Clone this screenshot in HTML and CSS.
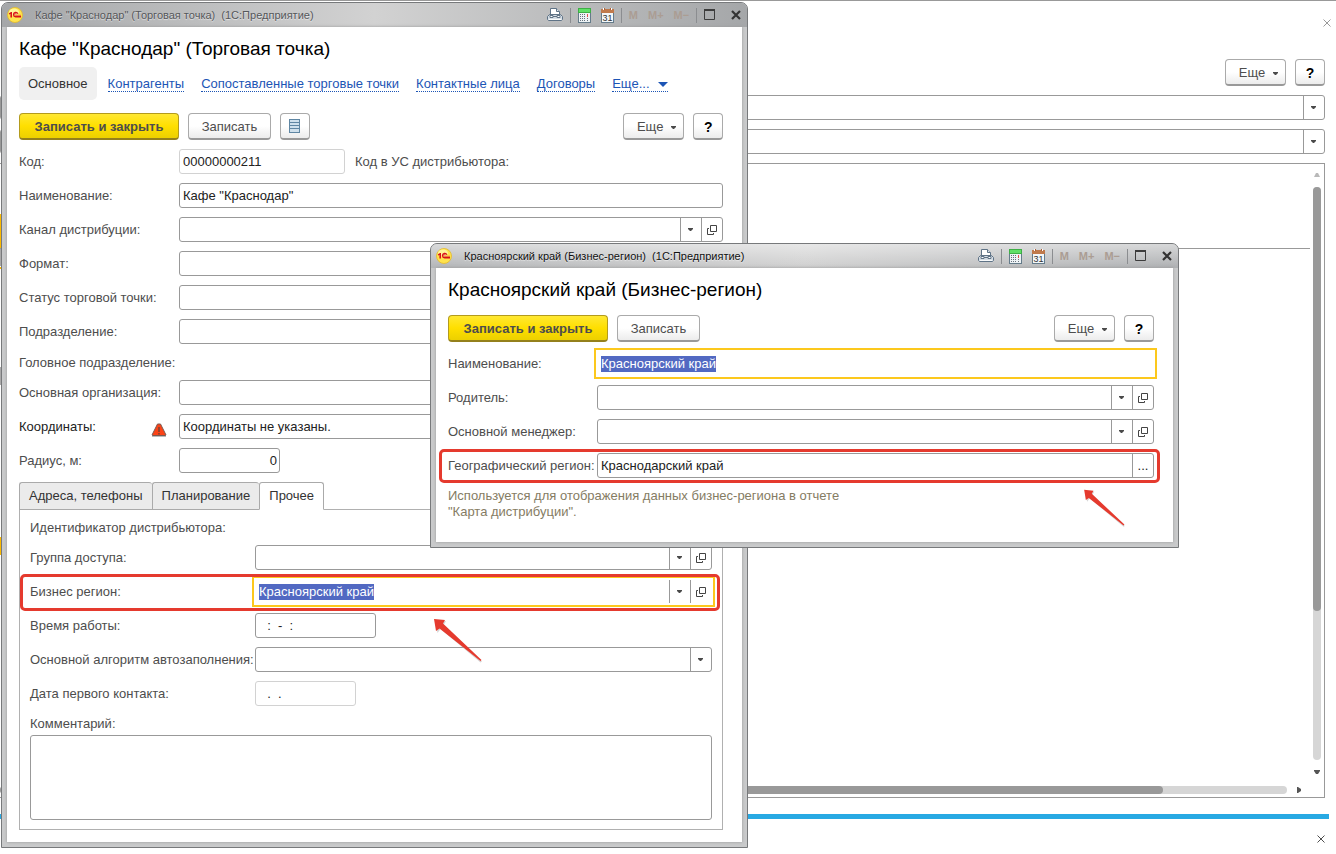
FILE: index.html
```
<!DOCTYPE html>
<html lang="ru">
<head>
    <meta charset="UTF-8">
    <meta name="viewport" content="width=device-width, initial-scale=1.0">
    <title>1С:Предприятие</title>
    <link rel="stylesheet" href="styles.css">
</head>
<body>

    <!-- Shared icons -->
    <svg class="sprite" aria-hidden="true">
        <symbol id="logo" viewBox="0 0 16 16">
            <circle cx="8" cy="8" r="7.5" fill="#ffe34d" stroke="#e3b92a" stroke-width="0.8"/>
            <ellipse cx="7" cy="5" rx="5" ry="3.5" fill="#fff59a"/>
            <path d="M2 6.3 L4 5 H5 V10.5 H3.4 V7 L2 7.6 Z" fill="#d8121b"/>
            <path d="M10.8 6.8 A2.2 2.2 0 1 0 8.6 9.8 H14" fill="none" stroke="#d8121b" stroke-width="1.4"/>
            <path d="M9.6 7.3 A0.9 0.9 0 1 0 8.8 8.3 H14" fill="none" stroke="#d8121b" stroke-width="0.6"/>
        </symbol>
        <symbol id="printer" viewBox="0 0 16 16">
            <path d="M3.5 8.5 V1.5 H9.5 L12.5 4.5 V8.5 Z" fill="#fff" stroke="#5f7386"/>
            <path d="M9.5 1.5 V4.5 H12.5" fill="#dde5ec" stroke="#5f7386"/>
            <path d="M2.5 7.5 H13.5 L15.5 9.5 V12.5 L14.5 13.5 H1.5 L0.5 12.5 V9.5 Z" fill="#d5dde4" stroke="#5f7386"/>
            <path d="M3 8.5 H6 V10.5 H3 Z M10 8.5 H13 V10.5 H10 Z M6 9.5 H10" fill="#fff" stroke="#5f7386"/>
            <path d="M2 12.5 H14" stroke="#f8fafb"/>
        </symbol>
        <symbol id="calc" viewBox="0 0 13 15">
            <rect x="0.5" y="0.5" width="12" height="14" fill="#eef3f5" stroke="#647b8a"/>
            <rect x="0" y="0" width="13" height="5" fill="#3faf46"/>
            <rect x="1" y="1" width="11" height="3" fill="#5fe066"/>
            <path d="M2 6.5 H8 M2 8.5 H8 M2 10.5 H8 M2 12.5 H8" stroke="#68717c" stroke-dasharray="1 1"/>
            <path d="M9.5 6 V9" stroke="#e4504a"/>
            <path d="M9.5 10 V13" stroke="#68717c" stroke-dasharray="1 1"/>
        </symbol>
        <symbol id="calendar" viewBox="0 0 13 15">
            <rect x="0.5" y="2.5" width="12" height="12" fill="#f3f8fa" stroke="#647b8a"/>
            <rect x="0" y="1" width="13" height="4" fill="#c07a4c"/>
            <path d="M2.5 0 V2 M10.5 0 V2" stroke="#fff"/>
            <path d="M3.5 0 V2 M9.5 0 V2" stroke="#a8623a"/>
            <text x="6.5" y="12.5" text-anchor="middle" class="calendar-day">31</text>
        </symbol>
        <symbol id="maximize" viewBox="0 0 12 12">
            <path d="M0.5 1 V10.5 H10.5 V1" fill="none" stroke="#3c3c3c"/>
            <path d="M0 1 H11" stroke="#3c3c3c" stroke-width="2"/>
        </symbol>
        <symbol id="close" viewBox="0 0 10 10">
            <path d="M1 1 L9 9 M9 1 L1 9" stroke="#333" stroke-width="2.2"/>
        </symbol>
        <symbol id="cross" viewBox="0 0 8 8">
            <path d="M0.5 0.5 L7.5 7.5 M7.5 0.5 L0.5 7.5" stroke="currentColor"/>
        </symbol>
        <symbol id="down" viewBox="0 0 5 3">
            <path d="M0 0 H5 V1 L3 3 H2 L0 1 Z" fill="#4a4a4a"/>
        </symbol>
        <symbol id="open" viewBox="0 0 10 10">
            <path d="M3.5 0.5 H9.5 V6.5 H3.5 Z M2 3.5 H0.5 V9.5 H6.5 V8" fill="none" stroke="#444"/>
        </symbol>
        <symbol id="arrow" viewBox="0 0 50 46">
            <path d="M2 3 L13 3 L10.5 7.5 L49 43.5 L47.5 44.5 L7.5 11 L4.5 15 Z" fill="#bbb" opacity="0.6"/>
            <path d="M1 1 L12 2 L10 5.5 L48.5 42 L47.5 43 L6.5 10.5 L3 13 Z" fill="#e53a2e"/>
        </symbol>
    </svg>

    <!-- Main window, partly covered -->
    <main class="desktop">
        <div class="desktop-top">
            <button class="plain pale" aria-label="Закрыть"><svg width="8" height="8"><use href="#cross"/></svg></button>
        </div>
        <div class="desktop-form">
            <div class="toolbar">
                <button class="btn more">Еще <svg width="5" height="3"><use href="#down"/></svg></button>
                <button class="btn help">?</button>
            </div>
            <select class="select" aria-label="Отбор 1"></select>
            <select class="select" aria-label="Отбор 2"></select>
            <div class="list">
                <div class="list-body">
                    <div class="list-header"></div>
                    <div class="scroll-y">
                        <svg width="6" height="4"><path d="M0 4 L2 0 H4 L6 4 Z" fill="#b9b9b9"/></svg>
                        <div class="track"><div class="thumb"></div></div>
                        <svg width="6" height="4"><path d="M0 0 H6 V1 L4 4 H2 L0 1 Z" fill="#555"/></svg>
                    </div>
                </div>
                <div class="scroll-x">
                    <div class="track"><div class="thumb"></div></div>
                    <svg width="4" height="6"><path d="M0 0 H1 L4 2 V4 L1 6 H0 Z" fill="#555"/></svg>
                </div>
            </div>
        </div>
        <div class="messages">
            <button class="plain" aria-label="Закрыть сообщения"><svg width="8" height="8"><use href="#cross"/></svg></button>
        </div>
    </main>

    <!-- Outlet window -->
    <section class="window window-outlet">
        <header class="titlebar">
            <svg class="logo" width="16" height="16"><use href="#logo"/></svg>
            <span class="caption">Кафе "Краснодар" (Торговая точка)&nbsp; (1С:Предприятие)</span>
            <div class="tools">
                <button class="plain" aria-label="Печать"><svg width="16" height="16"><use href="#printer"/></svg></button>
                <i class="sep"></i>
                <button class="plain" aria-label="Калькулятор"><svg width="13" height="15"><use href="#calc"/></svg></button>
                <button class="plain" aria-label="Календарь"><svg width="13" height="15"><use href="#calendar"/></svg></button>
                <i class="sep"></i>
                <button class="plain memory">M</button>
                <button class="plain memory">M+</button>
                <button class="plain memory">M−</button>
                <i class="sep"></i>
                <button class="plain" aria-label="Развернуть"><svg width="12" height="12"><use href="#maximize"/></svg></button>
                <button class="plain close" aria-label="Закрыть"><svg width="10" height="10"><use href="#close"/></svg></button>
            </div>
        </header>
        <div class="content">
            <h1>Кафе "Краснодар" (Торговая точка)</h1>
            <nav class="nav">
                <span class="current">Основное</span>
                <a href="#">Контрагенты</a>
                <a href="#">Сопоставленные торговые точки</a>
                <a href="#">Контактные лица</a>
                <a href="#">Договоры</a>
                <a href="#">Еще... <svg width="10" height="5"><path d="M0 0 H10 L5 5 Z" fill="#1c55b5"/></svg></a>
            </nav>
            <div class="toolbar">
                <button class="btn primary">Записать и закрыть</button>
                <button class="btn save">Записать</button>
                <button class="btn icon" aria-label="Список">
                    <svg width="12" height="14">
                        <rect x="0.5" y="0.5" width="10" height="13" fill="#cfe0ec" stroke="#5f86a3"/>
                        <path d="M1 3.5 H10 M1 6.5 H10 M1 9.5 H10" stroke="#5f86a3"/>
                    </svg>
                </button>
                <span class="spacer"></span>
                <button class="btn more">Еще <svg width="5" height="3"><use href="#down"/></svg></button>
                <button class="btn help">?</button>
            </div>

            <div class="form">
                <div class="row">
                    <label for="code">Код:</label>
                    <div class="field readonly code"><input id="code" value="00000000211" readonly></div>
                    <span class="after">Код в УС дистрибьютора:</span>
                </div>
                <div class="row">
                    <label for="name">Наименование:</label>
                    <div class="field"><input id="name" value='Кафе "Краснодар"'></div>
                </div>
                <div class="row">
                    <label for="channel">Канал дистрибуции:</label>
                    <div class="field">
                        <input id="channel">
                        <button aria-label="Выбрать"><svg width="5" height="3"><use href="#down"/></svg></button>
                        <button aria-label="Открыть"><svg width="10" height="10"><use href="#open"/></svg></button>
                    </div>
                </div>
                <div class="row">
                    <label for="format">Формат:</label>
                    <div class="field"><input id="format"></div>
                </div>
                <div class="row">
                    <label for="state">Статус торговой точки:</label>
                    <div class="field"><input id="state"></div>
                </div>
                <div class="row">
                    <label for="unit">Подразделение:</label>
                    <div class="field"><input id="unit"></div>
                </div>
                <div class="row text">Головное подразделение:</div>
                <div class="row">
                    <label for="org">Основная организация:</label>
                    <div class="field"><input id="org"></div>
                </div>
                <div class="row">
                    <label for="coords" class="dark">Координаты:
                        <svg class="warning" width="16" height="14">
                            <path d="M1 13 H15" stroke="#bbb" stroke-width="2"/>
                            <path d="M6.5 1 H9.5 L15 12 L14 12.5 H2 L1 12 Z" fill="#fb4316" stroke="#7a5a52"/>
                            <path d="M8 4 V9 M8 10 V11.5" stroke="#6d4338" stroke-width="1.4"/>
                        </svg>
                    </label>
                    <div class="field"><input id="coords" value="Координаты не указаны."></div>
                </div>
                <div class="row">
                    <label for="radius">Радиус, м:</label>
                    <div class="field radius"><input id="radius" value="0"></div>
                </div>
            </div>

            <div class="tabs">
                <button>Адреса, телефоны</button>
                <button>Планирование</button>
                <button class="active">Прочее</button>
            </div>
            <div class="form panel">
                <div class="row text">Идентификатор дистрибьютора:</div>
                <div class="row">
                    <label for="access">Группа доступа:</label>
                    <div class="field">
                        <input id="access">
                        <button aria-label="Выбрать"><svg width="5" height="3"><use href="#down"/></svg></button>
                        <button aria-label="Открыть"><svg width="10" height="10"><use href="#open"/></svg></button>
                    </div>
                </div>
                <div class="row marked">
                    <label for="region">Бизнес регион:</label>
                    <div class="field focused">
                        <input id="region" class="selected" size="15" value="Красноярский край">
                        <button aria-label="Выбрать"><svg width="5" height="3"><use href="#down"/></svg></button>
                        <button aria-label="Открыть"><svg width="10" height="10"><use href="#open"/></svg></button>
                    </div>
                    <svg class="pointer" width="50" height="46"><use href="#arrow"/></svg>
                </div>
                <div class="row">
                    <label for="hours">Время работы:</label>
                    <div class="field hours"><input id="hours" value="  :  -  :"></div>
                </div>
                <div class="row">
                    <label for="algorithm">Основной алгоритм автозаполнения:</label>
                    <select id="algorithm" class="select"></select>
                </div>
                <div class="row">
                    <label for="first">Дата первого контакта:</label>
                    <div class="field readonly date"><input id="first" value="  .  ." readonly></div>
                </div>
                <div class="comment">
                    <label for="comment">Комментарий:</label>
                    <textarea id="comment"></textarea>
                </div>
            </div>
        </div>
    </section>

    <!-- Business region window -->
    <section class="window window-region">
        <header class="titlebar">
            <svg class="logo" width="16" height="16"><use href="#logo"/></svg>
            <span class="caption">Красноярский край (Бизнес-регион)&nbsp; (1С:Предприятие)</span>
            <div class="tools">
                <button class="plain" aria-label="Печать"><svg width="16" height="16"><use href="#printer"/></svg></button>
                <i class="sep"></i>
                <button class="plain" aria-label="Калькулятор"><svg width="13" height="15"><use href="#calc"/></svg></button>
                <button class="plain" aria-label="Календарь"><svg width="13" height="15"><use href="#calendar"/></svg></button>
                <i class="sep"></i>
                <button class="plain memory">M</button>
                <button class="plain memory">M+</button>
                <button class="plain memory">M−</button>
                <i class="sep"></i>
                <button class="plain" aria-label="Развернуть"><svg width="12" height="12"><use href="#maximize"/></svg></button>
                <button class="plain close" aria-label="Закрыть"><svg width="10" height="10"><use href="#close"/></svg></button>
            </div>
        </header>
        <div class="content">
            <h1>Красноярский край (Бизнес-регион)</h1>
            <div class="toolbar">
                <button class="btn primary">Записать и закрыть</button>
                <button class="btn save">Записать</button>
                <span class="spacer"></span>
                <button class="btn more">Еще <svg width="5" height="3"><use href="#down"/></svg></button>
                <button class="btn help">?</button>
            </div>
            <div class="form">
                <div class="row">
                    <label for="r-name">Наименование:</label>
                    <div class="field focused"><input id="r-name" class="selected" size="15" value="Красноярский край"></div>
                </div>
                <div class="row">
                    <label for="r-parent">Родитель:</label>
                    <div class="field">
                        <input id="r-parent">
                        <button aria-label="Выбрать"><svg width="5" height="3"><use href="#down"/></svg></button>
                        <button aria-label="Открыть"><svg width="10" height="10"><use href="#open"/></svg></button>
                    </div>
                </div>
                <div class="row">
                    <label for="r-manager">Основной менеджер:</label>
                    <div class="field">
                        <input id="r-manager">
                        <button aria-label="Выбрать"><svg width="5" height="3"><use href="#down"/></svg></button>
                        <button aria-label="Открыть"><svg width="10" height="10"><use href="#open"/></svg></button>
                    </div>
                </div>
                <div class="row marked">
                    <label for="r-geo">Географический регион:</label>
                    <div class="field">
                        <input id="r-geo" value="Краснодарский край">
                        <button>...</button>
                    </div>
                    <svg class="pointer" width="43" height="39"><use href="#arrow"/></svg>
                </div>
                <p class="hint">Используется для отображения данных бизнес-региона в отчете "Карта дистрибуции".</p>
            </div>
        </div>
    </section>

</body>
</html>
```

FILE: styles.css
```
/* General page styling */
* {
    box-sizing: border-box;
}

body {
    margin: 0;
    background: #fff;
    color: #4d4d4d;
    font-family: "Liberation Sans", Arial, sans-serif;
    font-size: 13px;
    line-height: 16px;
    overflow: hidden;
}

button,
input,
select,
textarea {
    font: inherit;
    color: inherit;
    margin: 0;
}

svg {
    display: block;
    flex: none;
}

.sprite {
    display: none;
}

.calendar-day {
    font-size: 9px;
    fill: #333;
}

.plain {
    display: flex;
    padding: 0;
    border: none;
    background: none;
}

/* Main window behind the others */
.desktop {
    display: flex;
    flex-direction: column;
    height: 100vh;
    border-top: 1px solid #999;
    /* edge of the section panel */
    background: linear-gradient(#fff 213px, #fdbb00 213px 247px, #aaa 247px 265px, #fff 265px 266px, #fdbb00 266px 268px, #fff 268px 366px, #aaa 366px 384px, #fff 384px 536px, #fdbb00 536px 554px, #fff 554px) no-repeat left top / 1px 100%;
}

.desktop-top {
    display: flex;
    justify-content: flex-end;
    padding: 18px 5px 32px;
}

.pale {
    color: #999;
}

.desktop-form {
    flex: 1;
    display: flex;
    flex-direction: column;
    gap: 9px;
    margin-right: 11px;
}

.desktop-form .toolbar {
    justify-content: flex-end;
}

.list {
    flex: 1;
    display: flex;
    flex-direction: column;
    border: 1px solid #999;
    border-left: none;
}

.list-body {
    flex: 1;
    display: flex;
    padding-right: 3px;
}

.list-header {
    flex: 1;
    height: 85px;
    margin-right: 3px;
    border-bottom: 1px solid #999;
}

.scroll-y {
    display: flex;
    flex-direction: column;
    align-items: center;
    gap: 10px;
    padding: 9px 0 12px;
}

.track {
    flex: 1;
    border-radius: 4px;
    background: #d6d6d6;
}

.thumb {
    border-radius: 4px;
    background: #999;
}

.scroll-y .track {
    width: 8px;
}

.scroll-y .thumb {
    height: 74%;
}

.scroll-x {
    display: flex;
    align-items: center;
    gap: 10px;
    padding: 0 23px 3px 0;
}

.scroll-x .thumb {
    width: 90.4%;
    height: 8px;
}

.messages {
    display: flex;
    justify-content: flex-end;
    align-items: flex-start;
    height: 40px;
    margin: 16px 7px 0 0;
    padding: 16px 4px 0;
    border-top: 5px solid #28a9e3;
}

/* Windows */
.window {
    position: absolute;
    display: flex;
    flex-direction: column;
    padding: 0 5px 5px;
    border: 1px solid #77797b;
    border-radius: 7px 7px 0 0;
    background: #c9cacb;
}

.window-outlet {
    left: 1px;
    top: 2px;
    right: 44vw;
}

.window-region {
    left: 430px;
    top: 243px;
    right: 157px;
}

.titlebar {
    display: flex;
    align-items: center;
    height: 24px;
    margin: 0 -5px;
    padding: 0 6px 0 5px;
    border-radius: 6px 6px 0 0;
    background: linear-gradient(to right, #a5a7a9, #d2d2d2 50%, #a5a7a9);
    color: #55575a;
    font-size: 11px;
}

.window-region .titlebar {
    background: linear-gradient(rgba(255, 255, 255, 0.5), rgba(255, 255, 255, 0)), linear-gradient(to right, #b3b5b7, #cfcfcf 50%, #aeb0b2);
    color: #111;
}

.caption {
    flex: 1;
    margin-left: 12px;
    white-space: nowrap;
    text-shadow: 0 1px 1px rgba(255, 255, 255, 0.6);
}

.tools {
    display: flex;
    align-items: center;
    gap: 10px;
}

.tools .sep {
    width: 1px;
    height: 15px;
    margin: 0 -3px;
    background: #8b8d90;
}

.tools .close {
    margin-left: 5px;
}

.memory {
    font-size: 11px;
    font-weight: bold;
    color: #ab9d93;
}

.content {
    padding: 10px 19px 12px 12px;
    background: #fff;
    box-shadow: 0 0 3px #999;
}

h1 {
    margin: 0;
    color: #000;
    font-size: 19px;
    font-weight: normal;
    line-height: 24px;
}

/* Links under the heading */
.nav {
    display: flex;
    align-items: center;
    gap: 17px;
    margin-top: 6px;
}

.nav .current {
    margin-right: -6px;
    padding: 9px 9px 8px;
    border-radius: 5px;
    background: #f0f0f0;
    color: #333;
}

.nav a {
    display: flex;
    align-items: center;
    gap: 8px;
    padding-top: 2px;
    border-bottom: 1px dotted #1c55b5;
    color: #1c55b5;
    line-height: 14px;
    text-decoration: none;
    white-space: nowrap;
}

/* Command bar */
.toolbar {
    display: flex;
    gap: 9px;
}

.content .toolbar {
    margin: 13px 0 9px;
}

.spacer {
    flex: 1;
}

.btn {
    display: flex;
    align-items: center;
    justify-content: center;
    height: 27px;
    padding: 2px 0 0;
    border: 1px solid #aaa;
    border-bottom: 2px solid #999;
    border-radius: 4px;
    background: linear-gradient(#fff 50%, #ececec);
    white-space: nowrap;
}

.btn.primary {
    width: 160px;
    border-color: #b39b1d;
    border-bottom-color: #94801c;
    background: linear-gradient(#ffe833, #ffdf00 50%, #ecd000);
    font-weight: bold;
}

.btn.save {
    width: 83px;
}

.btn.more {
    gap: 8px;
    width: 61px;
    padding-left: 6px;
}

.btn.icon,
.btn.help {
    width: 30px;
}

.btn.icon {
    padding: 0;
}

.btn.help {
    color: #000;
    font-size: 14px;
    font-weight: bold;
}

/* Forms */
.form {
    display: flex;
    flex-direction: column;
    gap: 9px;
}

.row {
    position: relative;
    display: flex;
    align-items: center;
    min-height: 25px;
}

.row.text {
    min-height: 18px;
    padding-top: 2px;
}

.row label {
    display: flex;
    justify-content: space-between;
    width: 160px;
    padding-right: 12px;
    white-space: nowrap;
}

.row .dark {
    color: #222;
}

.warning {
    margin: 4px 0 -4px;
}

.panel .row label {
    width: 225px;
    padding: 0;
}

.window-region .row label {
    width: 149px;
    padding: 0;
}

.after {
    margin-left: 10px;
}

.field {
    flex: 1;
    display: flex;
    align-items: center;
    justify-content: space-between;
    height: 25px;
    border: 1px solid #999;
    border-radius: 3px;
    background: #fff;
    color: #222;
}

.field input {
    flex: 1;
    min-width: 0;
    height: 16px;
    margin: 0 3px;
    padding: 0;
    border: none;
    background: none;
    outline: none;
    white-space: pre;
}

.field button {
    display: flex;
    align-items: center;
    justify-content: center;
    width: 21px;
    height: 23px;
    padding: 0 1px 0 0;
    border: none;
    border-left: 1px solid #999;
    background: none;
}

.field button:last-child {
    padding: 0;
}

.field.readonly {
    border-color: #d2d2d2;
}

.field.code {
    flex: none;
    width: 166px;
}

.field.radius {
    flex: none;
    width: 101px;
}

.field.radius input {
    margin-right: 2px;
    text-align: right;
}

.field.hours {
    flex: none;
    width: 121px;
}

.field.date {
    flex: none;
    width: 101px;
}

.hours input,
.date input {
    padding-left: 1px;
}

.field.focused {
    border-color: #fff;
    border-radius: 0;
    outline: 2px solid #fcc81d;
    outline-offset: 1px;
}

.field input.selected {
    flex: none;
    margin-right: auto;
    field-sizing: content;
    background: #5269c2;
    color: #fff;
}

.select {
    flex: 1;
    height: 25px;
    padding: 0 24px 0 3px;
    border: 1px solid #999;
    border-radius: 3px;
    appearance: none;
    background:
        url("data:image/svg+xml,%3Csvg xmlns='http://www.w3.org/2000/svg' width='5' height='3'%3E%3Cpath d='M0 0H5V1L3 3H2L0 1Z' fill='%234a4a4a'/%3E%3C/svg%3E") no-repeat right 8px center,
        linear-gradient(#999, #999) no-repeat right 20px top / 1px 100%;
}

.desktop-form .select {
    flex: none;
}

/* Red frame and arrow over a row */
.marked::after {
    content: "";
    position: absolute;
    inset: -5px -8px -7px -10px;
    border: 3px solid #e53a2e;
    border-radius: 5px;
    pointer-events: none;
}

.window-region .marked::after {
    inset: -4px -6px -5px -9px;
}

.pointer {
    position: absolute;
    left: 403px;
    top: 39px;
    z-index: 1;
}

.window-region .pointer {
    left: auto;
    right: 28px;
    top: 36px;
}

.hint {
    max-width: 400px;
    margin: 1px 0 10px;
    color: #857c63;
}

/* Tabs */
.tabs {
    position: relative;
    display: flex;
    margin: 9px 0 -1px;
}

.tabs button {
    height: 28px;
    padding: 0 9px;
    border: 1px solid #aaa;
    border-right: none;
    border-radius: 3px 3px 0 0;
    background: #ebebeb;
    color: #333;
}

.tabs .active {
    border-right: 1px solid #aaa;
    border-bottom-color: #fff;
    background: #fff;
}

.panel {
    padding: 8px 10px 9px;
    border: 1px solid #b0b0b0;
}

.comment {
    display: flex;
    flex-direction: column;
    gap: 3px;
    padding-top: 1px;
}

textarea {
    height: 85px;
    border: 1px solid #999;
    border-radius: 3px;
    resize: none;
}
```
